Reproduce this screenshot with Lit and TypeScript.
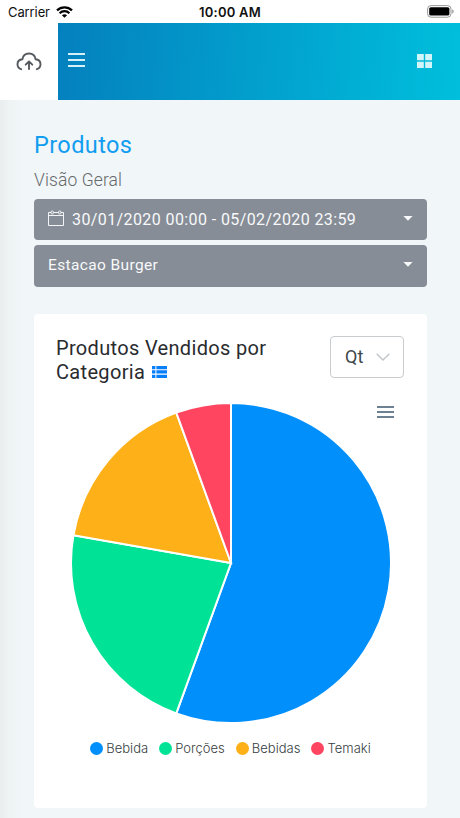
import { LitElement, html, svg, css } from "lit";
import { customElement, property } from "lit/decorators.js";

interface Slice {
  label: string;
  value: number;
  color: string;
}

const SALES: Slice[] = [
  { label: "Bebida", value: 10, color: "#008ffb" },
  { label: "Porções", value: 4, color: "#00e396" },
  { label: "Bebidas", value: 3, color: "#feb019" },
  { label: "Temaki", value: 1, color: "#ff4560" },
];

@customElement("status-bar")
class StatusBar extends LitElement {
  static styles = css`
    :host { display: grid; grid-template-columns: 1fr auto 1fr; align-items: center; height: 23px; padding: 1px 6px 0 8px; box-sizing: border-box; background: #fff; color: #111; font: 400 13px/20px Inter, sans-serif; }
    .carrier { display: flex; align-items: center; gap: 6px; letter-spacing: -0.1px; }
    .time { font-weight: 600; letter-spacing: 0.25px; margin-right: 2px; }
    .battery { justify-self: end; }
    svg { display: block; margin-top: -1px; }
  `;
  render() {
    return html`
      <div class="carrier"><span>Carrier</span>
        <svg width="17" height="12" viewBox="0 0 17 12">
          <path d="M1 4.4C5.2.3 11.8.3 16 4.4" fill="none" stroke="#000" stroke-width="2.3"/>
          <path d="M3.6 7.2c2.8-2.7 7-2.7 9.8 0" fill="none" stroke="#000" stroke-width="2.2"/>
          <path d="M5.9 9.2c1.6-1.4 3.6-1.4 5.2 0L8.5 11.8z"/>
        </svg>
      </div>
      <div class="time">10:00 AM</div>
      <svg class="battery" width="27" height="13" viewBox="0 0 27 13">
        <rect x=".6" y=".6" width="23.4" height="11.6" rx="3.4" fill="none" stroke="#999"/>
        <rect x="2.2" y="2.2" width="20.2" height="8.4" rx="1.6"/>
        <path d="M25.2 4.4c2 .7 2 3.3 0 4z" fill="#999"/>
      </svg>`;
  }
}

@customElement("pie-chart")
class PieChart extends LitElement {
  @property({ attribute: false }) slices: Slice[] = [];
  static styles = css`
    :host { display: block; }
    svg { display: block; margin: 0 auto; }
    .legend { display: flex; justify-content: center; gap: 11px; margin-top: 15px; font: 300 13px/18px Inter, sans-serif; color: #373d3f; }
    .item { display: flex; align-items: center; gap: 3px; letter-spacing: 0.02px; }
    .dot { width: 13px; height: 13px; border-radius: 50%; }
  `;
  render() {
    const total = this.slices.reduce((sum, s) => sum + s.value, 0);
    let turn = 0;
    const point = (t: number) =>
      `${161 + 160 * Math.sin(t * 2 * Math.PI)} ${161 - 160 * Math.cos(t * 2 * Math.PI)}`;
    const wedges = this.slices.map((s) => {
      const from = turn;
      turn += s.value / total;
      return svg`<path d="M161 161L${point(from)}A160 160 0 ${turn - from > 0.5 ? 1 : 0} 1 ${point(turn)}Z" fill=${s.color} stroke="#fff" stroke-width="2"/>`;
    });
    return html`
      <svg width="322" height="322" viewBox="0 0 322 322">${wedges}</svg>
      <div class="legend">
        ${this.slices.map((s) => html`<div class="item"><span class="dot" style="background:${s.color}"></span><span>${s.label}</span></div>`)}
      </div>`;
  }
}

@customElement("app-root")
class AppRoot extends LitElement {
  static styles = css`
    :host { display: flex; flex-direction: column; height: 818px; overflow: hidden; background: #f1f6f8; font-family: Roboto, sans-serif; }
    svg { display: block; }
    .header { display: flex; height: 77px; flex: none; }
    .brand { width: 58px; background: #fff; display: flex; align-items: center; justify-content: center; }
    .bar { flex: 1; display: flex; align-items: center; justify-content: space-between; padding: 0 28px 0 10px; background: linear-gradient(95deg, #0480be, #00bfdc); }
    .menu { margin-bottom: 4px; }
    .apps { margin-bottom: 2px; }
    .page { flex: 1; padding: 28px 33px 10px 34px; background: linear-gradient(90deg, #e9edee 0, #eef3f4 9px, #f1f6f8 22px); display: flex; flex-direction: column; }
    h1 { margin: 0; font-weight: 400; font-size: 23.5px; line-height: 34px; color: #119df0; letter-spacing: 0.4px; }
    h2 { margin: 3px 0 0; font-weight: 300; font-size: 17.5px; line-height: 30px; color: #666a6c; letter-spacing: 0.1px; }
    .select { display: flex; align-items: center; height: 41px; box-sizing: border-box; padding: 0 14px; border-radius: 4px; background: #878d96; color: #f7f9fb; font-size: 15.5px; }
    .date { margin-top: 4px; }
    .date svg.cal { margin: -3px 8px 0 0; }
    .date span { font-size: 16px; letter-spacing: 0.4px; }
    .store { margin-top: 5px; height: 42px; }
    .store span { letter-spacing: 0.37px; margin-top: -2px; }
    .caret { margin-left: auto; margin-top: -3px; }
    .card { margin-top: 27px; flex: 1; background: #fff; border-radius: 4px; padding: 22px 22px 0; }
    .top { display: flex; justify-content: space-between; align-items: flex-start; }
    h3 { margin: 0; font-weight: 400; font-size: 20px; line-height: 24px; color: #292b2f; letter-spacing: 0.33px; width: 230px; }
    .list { display: inline-block; margin-left: 2px; vertical-align: 1px; }
    .unit { display: flex; align-items: center; justify-content: space-between; width: 74px; height: 42px; margin-right: 1px; box-sizing: border-box; padding: 0 13px 0 14px; border: 1px solid #c9cccf; border-radius: 4px; font-size: 18px; color: #41474c; }
    .unit span { margin-top: -2px; }
    .chart { position: relative; margin-top: 18px; }
    .tools { position: absolute; right: 11px; top: 4px; }
  `;
  private caret() {
    return html`<svg class="caret" width="10" height="5" viewBox="0 0 10 5"><path d="M.4 0h9.2L5 4.8z" fill="#f7f9fb"/></svg>`;
  }
  render() {
    return html`
      <status-bar></status-bar>
      <header class="header">
        <div class="brand">
          <svg width="26" height="20" viewBox="0 0 26 20" fill="none" stroke="#555a5f" stroke-width="1.9" stroke-linecap="round" stroke-linejoin="round">
            <path d="M5.2 17.2C2.8 16.5 1.5 14.6 1.5 12.3c0-2.7 2-4.7 4.9-5C6.9 3.9 9.5 1.5 13 1.5s6.1 2.4 6.6 5.8c2.9.3 4.9 2.3 4.9 5 0 2.3-1.3 4.2-3.7 4.9"/>
            <path d="M13 17V9.8M9.7 12.7 13 9.4l3.3 3.3"/>
          </svg>
        </div>
        <div class="bar">
          <svg class="menu" width="17" height="14" viewBox="0 0 17 14"><path d="M0 1h17M0 7h17M0 13h17" stroke="#d6f0fa" stroke-width="2"/></svg>
          <svg class="apps" width="15" height="14" viewBox="0 0 15 14" fill="#d2f5fa"><path d="M0 0h6.8v6.3H0zM8.2 0H15v6.3H8.2zM0 7.7h6.8V14H0zM8.2 7.7H15V14H8.2z"/></svg>
        </div>
      </header>
      <main class="page">
        <h1>Produtos</h1>
        <h2>Visão Geral</h2>
        <div class="select date">
          <svg class="cal" width="16" height="16" viewBox="0 0 16 16" fill="none" stroke="#f2f4f6" stroke-width="1">
            <path d="M3 2.5H.5v13h15v-13H13M5.5 2.5h5M.5 5.5h15"/><rect x="3" y="1" width="2.4" height="3" rx="1"/><rect x="10.6" y="1" width="2.4" height="3" rx="1"/>
          </svg>
          <span>30/01/2020 00:00 - 05/02/2020 23:59</span>${this.caret()}
        </div>
        <div class="select store"><span>Estacao Burger</span>${this.caret()}</div>
        <section class="card">
          <div class="top">
            <h3>Produtos Vendidos por Categoria <svg class="list" width="15" height="12" viewBox="0 0 15 12" fill="#087ffa"><path d="M0 0h3.4v3.3H0zM4.4 0H15v3.3H4.4zM0 4.3h3.4v3.3H0zM4.4 4.3H15v3.3H4.4zM0 8.7h3.4V12H0zM4.4 8.7H15V12H4.4z"/></svg></h3>
            <div class="unit"><span>Qt</span><svg width="14" height="8" viewBox="0 0 14 8"><path d="M.7.7 7 7 13.3.7" fill="none" stroke="#bfc3c6" stroke-width="1.3"/></svg></div>
          </div>
          <div class="chart">
            <pie-chart .slices=${SALES}></pie-chart>
            <svg class="tools" width="17" height="12" viewBox="0 0 17 12"><path d="M0 1h17M0 6h17M0 11h17" stroke="#6e8192" stroke-width="1.8"/></svg>
          </div>
        </section>
      </main>`;
  }
}
